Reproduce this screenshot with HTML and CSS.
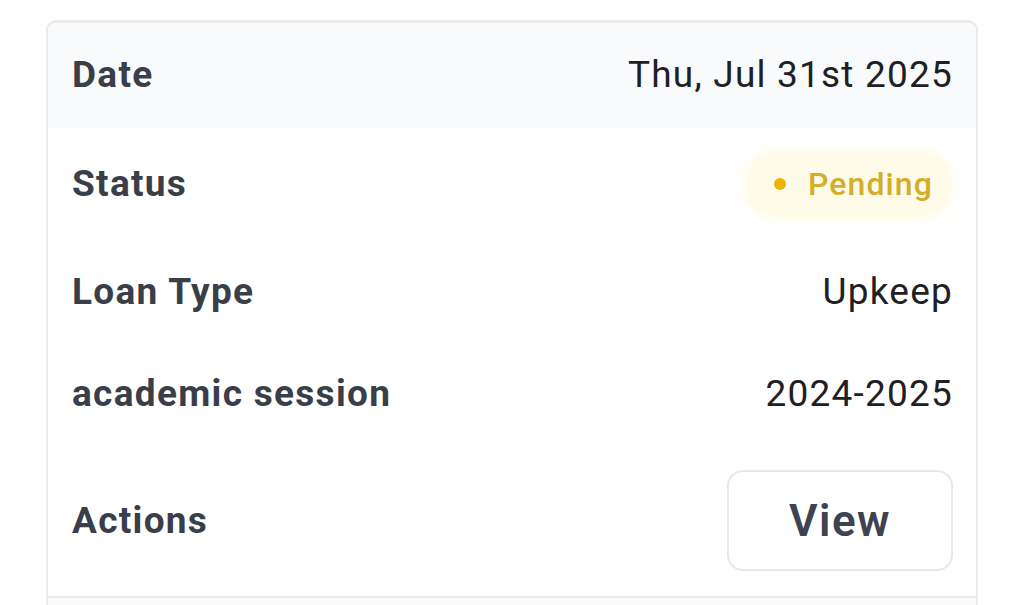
FILE: index.html
```html
<!DOCTYPE html>
<html lang="en">
<head>
    <meta charset="UTF-8">
    <meta name="viewport" content="width=device-width, initial-scale=1.0">
    <title>Loan Details</title>
    <link rel="stylesheet" href="styles.css">
</head>
<body>

    <div class="card">
        <div class="row row-date">
            <span class="label">Date</span>
            <span class="value">Thu, Jul 31st 2025</span>
        </div>
        <div class="row row-status">
            <span class="label">Status</span>
            <span class="badge"><span class="dot"></span>Pending</span>
        </div>
        <div class="row">
            <span class="label">Loan Type</span>
            <span class="value">Upkeep</span>
        </div>
        <div class="row row-session">
            <span class="label">academic session</span>
            <span class="value">2024-2025</span>
        </div>
        <div class="row row-actions">
            <span class="label">Actions</span>
            <button class="view-button">View</button>
        </div>
        <div class="row row-next"></div>
    </div>

</body>
</html>
```

FILE: styles.css
```css
body {
    background-color: #fff;
    font-family: Roboto, 'Noto Sans', Arial, sans-serif;
    margin: 0;
    overflow: hidden;
}

.card {
    margin: 20px 0 0 46px;
    width: 928px;
    border: 2px solid #ebebed;
    border-top-width: 3px;
    border-bottom: none;
    border-radius: 10px 10px 0 0;
    overflow: hidden;
}

.row {
    display: flex;
    justify-content: space-between;
    align-items: center;
    padding: 30px 23px 30px 24px;
    line-height: 44px;
}

.row-date {
    background-color: #f9fafb;
    padding-bottom: 31px;
}

.row-status {
    padding-top: 23px;
    padding-bottom: 23px;
}

.row-session {
    padding-top: 28px;
    padding-bottom: 28px;
}

.row-actions {
    padding-top: 26px;
    padding-bottom: 25px;
    border-bottom: 2px solid #ebebed;
}

.row-next {
    background-color: #fafafa;
    height: 60px;
    padding: 0;
}

.label {
    font-size: 37px;
    font-weight: 700;
    letter-spacing: 1.3px;
    color: #393e48;
}

.value {
    font-size: 37px;
    letter-spacing: 1.2px;
    color: #1f2023;
}

.badge {
    display: flex;
    align-items: center;
    height: 66px;
    padding: 0 20px 0 29px;
    background-color: #fefce8;
    border-radius: 33px;
    box-shadow: 0 0 10px 4px #fffdf0;
    color: #d4ad2c;
    font-size: 32px;
    font-weight: 500;
    letter-spacing: 1.1px;
}

.dot {
    width: 12px;
    height: 12px;
    border-radius: 50%;
    background-color: #eab308;
    margin-right: 22px;
}

.view-button {
    width: 226px;
    height: 101px;
    background-color: #fff;
    border: 2px solid #e5e7eb;
    border-radius: 16px;
    font-family: Roboto, 'Noto Sans', Arial, sans-serif;
    font-size: 44px;
    font-weight: 600;
    letter-spacing: 1.5px;
    color: #3d4350;
    cursor: pointer;
}
```
